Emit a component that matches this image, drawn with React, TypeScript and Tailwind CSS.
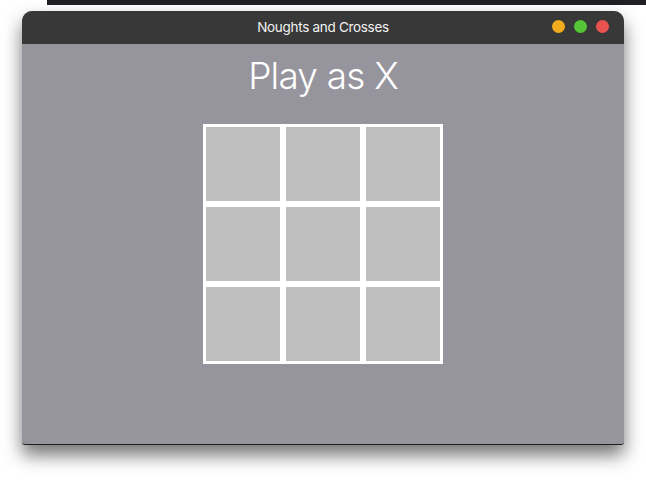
const cells = Array.from({ length: 9 }, (_, i) => i);

const App = () => {
  return (
    <div className="w-[646px] h-[483px] bg-white overflow-hidden font-[Inter,'Noto_Sans',sans-serif]">
      <div className="ml-[47px] h-[5px] bg-[#202124]"></div>

      <div className="ml-[22px] mt-[6px] w-[602px] h-[434px] rounded-t-[10px] rounded-b-[3px] overflow-hidden bg-[#96949d] border-b border-[#1e1e1e] shadow-[0_10px_18px_rgba(0,0,0,0.55)] flex flex-col">
        <div className="relative h-[33px] bg-[#383838] flex items-center justify-center">
          <span className="text-[13.5px] text-[#f2f2f2] tracking-[-0.3px]">Noughts and Crosses</span>
          <div className="absolute right-[15px] top-[9px] flex gap-[9px]">
            <span className="w-[13px] h-[13px] rounded-full bg-[#f0ac1c]"></span>
            <span className="w-[13px] h-[13px] rounded-full bg-[#54c635]"></span>
            <span className="w-[13px] h-[13px] rounded-full bg-[#e9534f]"></span>
          </div>
        </div>

        <div className="flex flex-col items-center">
          <h1 className="mt-[9px] h-[46px] leading-[46px] text-[37px] font-light text-white tracking-[-0.8px]">
            Play as X
          </h1>
          <div className="mt-[25px] grid grid-cols-3 w-[240px]">
            {cells.map((c) => (
              <div key={c} className="w-[80px] h-[80px] border-[3px] border-white bg-[#bfbfbf]"></div>
            ))}
          </div>
        </div>
      </div>
    </div>
  );
};

export default App;
